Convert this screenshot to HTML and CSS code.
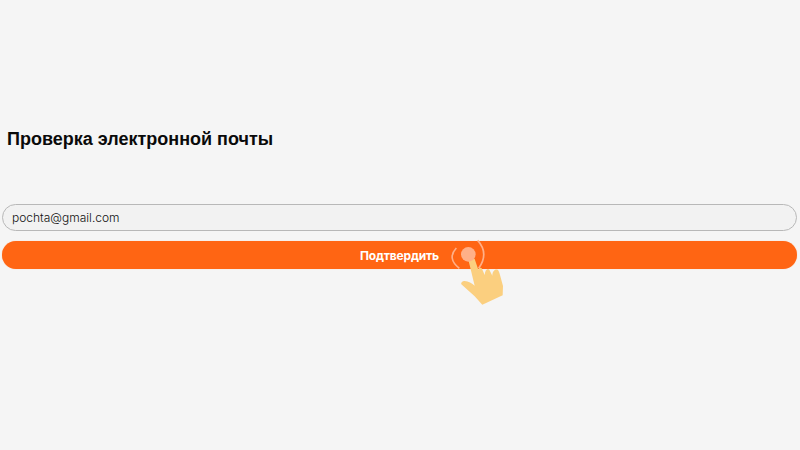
FILE: index.html
```html
<!DOCTYPE html>
<html lang="ru">
<head>
<meta charset="utf-8">
<title>Проверка электронной почты</title>
<link rel="stylesheet" href="styles.css">
</head>
<body>
<main class="page">
  <h1 class="title">Проверка электронной почты</h1>
  <form class="form">
    <input class="field" type="text" value="pochta@gmail.com">
    <button class="submit" type="button">Подтвердить</button>
    <svg class="hand" viewBox="0 0 270 270" aria-hidden="true">
      <path class="arc" d="M79 69Q50 100 88 130"/>
      <path class="arc" d="M143 46Q178 85 146 130"/>
      <path class="skin" d="M114 100C121 98 130 98 134 102L145 134C147 128 153 127 156 131L164 150C165 134 173 128 178 134L187 152C187 138 195 131 203 134C206 136 208 142 210 150L219 183L218 211L157 239L134 214L94 178C92 173 98 168 104 168C115 169 126 175 134 182Z"/>
      <circle class="dot" cx="115" cy="88" r="22"/>
    </svg>
  </form>
</main>
</body>
</html>
```

FILE: styles.css
```css
html, body {
  margin: 0;
  height: 100%;
}

body {
  background: #f5f5f5;
  overflow: hidden;
}

.page {
  padding: 128px 3px 0 2px;
}

.title {
  margin: 0 0 53px 5px;
  font: 700 18px/23px "Liberation Sans", Arial, sans-serif;
  color: #0a0a0a;
}

.form {
  position: relative;
  display: flex;
  flex-direction: column;
  gap: 10px;
}

.field {
  box-sizing: border-box;
  width: 100%;
  height: 27px;
  padding: 0 9px;
  border: 1px solid #b8b8b8;
  border-radius: 14px;
  background: #f2f2f2;
  font: 300 12px "Inter", sans-serif;
  color: #111;
  outline: none;
}

.submit {
  width: 100%;
  height: 28px;
  padding: 0;
  border: 0;
  border-radius: 14px;
  background: #ff6513;
  box-shadow: 0 0 1px #ffb68c;
  font: 700 12px "Inter", sans-serif;
  letter-spacing: -0.18px;
  color: #fff;
}

.hand {
  position: absolute;
  left: 428px;
  top: 21px;
  width: 90px;
  height: 90px;
}

.arc {
  fill: none;
  stroke: #ffb088;
  stroke-width: 5;
}

.skin {
  fill: #fbcf7f;
}

.dot {
  fill: #ffb088;
}
```
